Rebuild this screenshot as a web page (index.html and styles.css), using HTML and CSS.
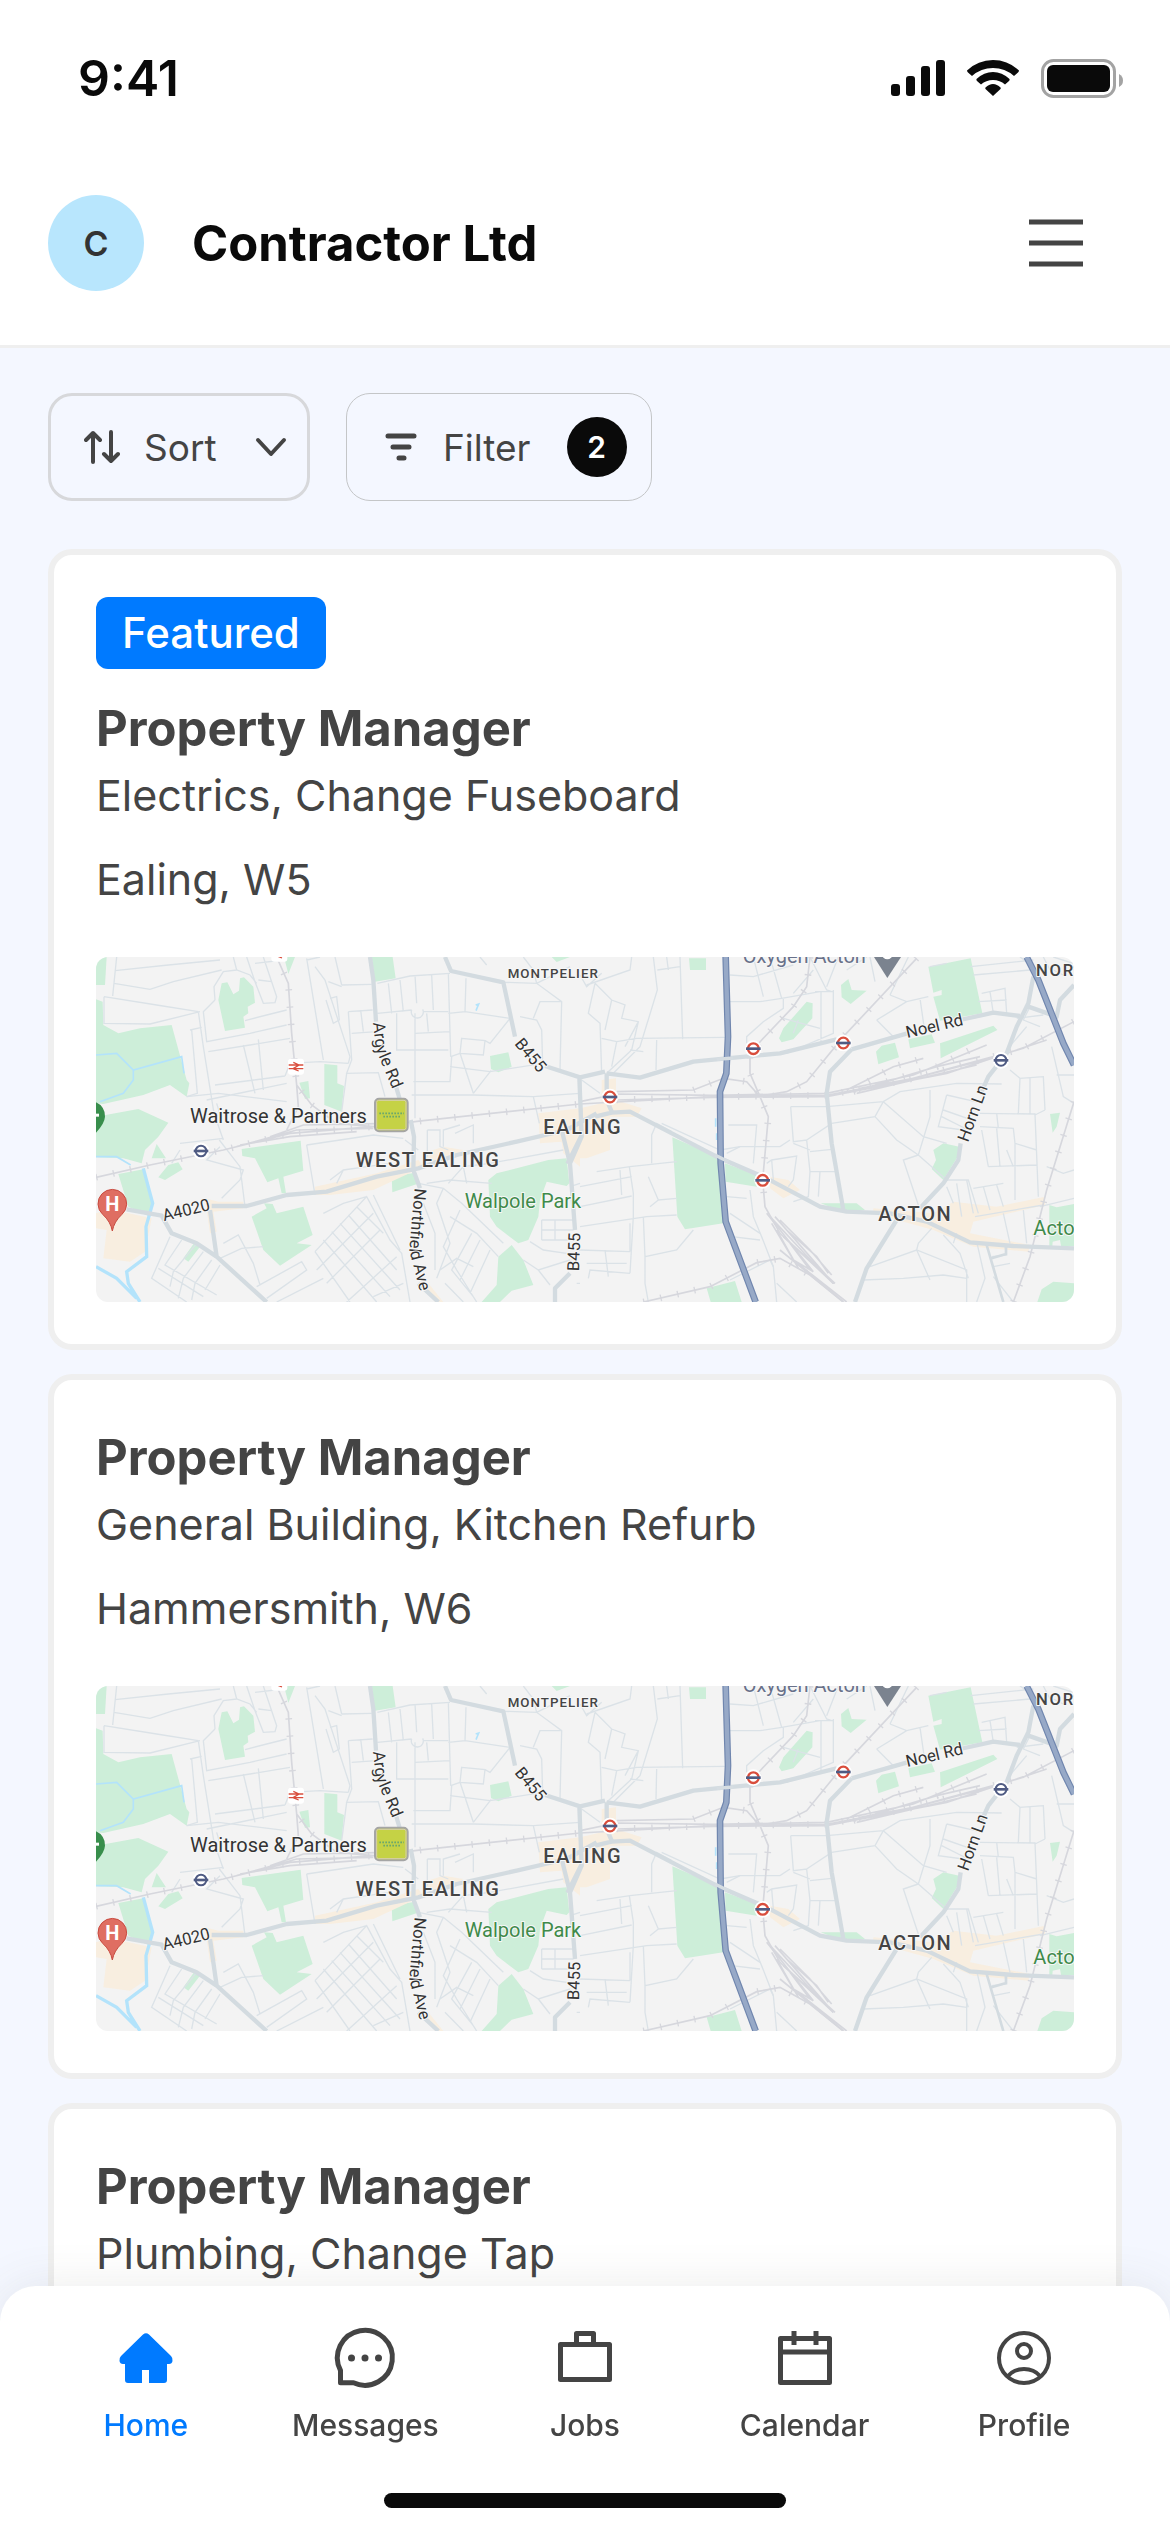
FILE: index.html
```html
<!DOCTYPE html>
<html lang="en">
<head>
    <meta charset="UTF-8">
    <meta name="viewport" content="width=device-width, initial-scale=1.0">
    <title>Contractor Ltd - Jobs</title>
    <link rel="stylesheet" href="styles.css">
</head>
<body>
    <!-- Map shared by the job cards -->
    <svg class="defs" aria-hidden="true">
        <defs>
            <path id="argylePath" d="M849 218L858 300L905 412L940 500" />
            <path id="northfieldPath" d="M974 714L958 900L995 1045" />
            <g id="tube">
                <circle r="25" fill="#fff" />
                <circle r="16" fill="#fff" stroke="#d94d3c" stroke-width="7" />
                <rect x="-22" y="-4" width="44" height="8" fill="#4f5b83" />
            </g>
            <g id="overground">
                <circle r="25" fill="#fff" />
                <circle r="16" fill="#fff" stroke="#4f5b83" stroke-width="6" />
                <rect x="-22" y="-4" width="44" height="8" fill="#4f5b83" />
            </g>
            <g id="rail">
                <rect x="-24" y="-24" width="48" height="48" rx="9" fill="#fff" />
                <path d="M-22 -5H22M-22 6H22M-8 -13L9 -5L-9 6L8 13" fill="none" stroke="#d94d3c" stroke-width="4" />
            </g>
        </defs>
        <symbol id="map" viewBox="18 21 2934 1035" preserveAspectRatio="xMidYMid slice">
            <rect x="18" y="21" width="2934" height="1035" fill="#f3f3f3" />

            <!-- Parks -->
            <g fill="#cdeed9">
                <path d="M18 21H50L45 105H18ZM18 148L38 155L40 225L85 250L150 235L245 225L290 390L298 400L290 440L240 405L160 435L40 462L18 460Z" />
                <path d="M385 150L395 100L412 97L430 133L447 122L450 85L462 82L490 110L495 158L473 170L475 190L460 200L465 233L405 243Z" />
                <path d="M18 500L145 477L235 518L205 560L165 600L155 640L100 625L18 622ZM200 582L228 625H185ZM205 682L235 645L265 637L278 658L225 690ZM85 672L160 658L190 755L180 800L115 770Z" />
                <path d="M582 21H615L595 72ZM845 21H908L917 85L855 95ZM703 342L742 346V400L762 408L755 485L703 465ZM628 398L655 393L660 445L645 447ZM1200 318L1255 307L1265 350L1225 367L1203 357Z" />
                <path d="M455 597L632 572L640 662L580 680L588 730H575L565 685L532 697L495 625L457 618ZM485 800L530 775L522 760L548 762L560 790L640 770L668 855L620 880L665 885L570 947L520 900Z" />
                <path d="M905 680L975 668L988 700L907 727ZM280 925L312 880L330 890L295 935ZM1385 21H1440L1400 36Z" />
                <path d="M1195 690L1220 670L1375 630L1430 625L1438 700L1430 708L1370 695L1350 750L1345 800L1315 870L1285 880L1220 830L1200 800ZM1265 885L1300 930L1330 1005L1265 1022L1230 1056H1175L1220 1005L1225 920Z" />
                <g transform="translate(1470 0)">
                    <path d="M327 25H378V60H330ZM783 105L805 87L815 120L860 122L812 162L785 142ZM597 265L610 235L680 155L698 160L697 205L640 268L605 277Z" />
                    <path d="M1045 50L1172 25L1207 190L1080 212L1060 140L1085 135V120L1060 128ZM888 305L905 287L945 278L957 322L895 343ZM985 268L1055 253L1065 278L990 295ZM1080 280L1240 227L1252 240L1082 325Z" />
                    <path d="M1060 600L1090 580L1138 590L1133 620L1090 690L1055 657L1068 630ZM277 562L412 620L420 700L430 820L315 838L292 800ZM435 640L545 680L530 710L437 695ZM722 760H830L855 780L780 782Z" />
                    <path d="M1408 765L1430 772L1482 762V888H1443L1440 870L1418 875L1417 888H1408ZM1410 492L1440 488L1430 530L1418 548ZM1385 1018L1420 995L1482 1000V1056H1372ZM380 1015L465 993L485 1056H392Z" />
                </g>
            </g>

            <!-- High streets -->
            <g fill="#f8eee0">
                <path d="M18 790L60 778L185 805L165 905L120 935L40 925L50 840L18 835ZM345 745L385 755H460V775L370 785L380 845L360 850ZM675 710L860 670L985 630L1000 650L850 720L720 735H675Z" />
                <path d="M1000 610L1060 590L1120 600L1060 640L1000 635ZM1345 490L1470 475V650L1420 610L1415 575L1350 580ZM1000 1010L1015 1000L1060 1056H1035Z" />
                <path transform="translate(1470 0)" d="M0 475L65 460V390L108 385V450L185 475L170 500L90 500V600L20 625H0ZM570 680L625 690L660 720L610 745L570 715ZM880 775L1060 790L1120 755L1250 770L1395 740V765L1180 815L1170 850L1350 885L1345 905L1180 890L1060 840L880 790Z" />
            </g>

            <!-- Water -->
            <g fill="none" stroke="#b3e3fb" stroke-width="5">
                <path d="M18 315L80 310L130 360L275 320L282 370M130 360V390L100 430L30 455M18 620L80 620L122 645M1157 165L1166 162L1158 182M1877 505V530M1880 550V570" />
                <path stroke-width="10" d="M160 655L188 760L168 830L170 920L110 965L115 1000L150 1056M18 950L80 985L140 1045" />
            </g>

            <!-- Side streets -->
            <g fill="none" stroke="#dbe2e7" stroke-width="4">
                <path d="M80 21L68 138M75 62L235 45L390 30M72 100L180 118L250 95L395 60M42 140L200 165L325 185M42 140V220L180 222L330 185M325 185L340 290L372 490L400 570M300 240L335 232M305 240L322 430L290 440" />
                <path d="M375 150L372 110L400 65L440 60L480 75L500 100M375 150L340 185L350 275L480 250L590 225M430 21L440 60M470 21L495 95L520 160L555 158L560 140L520 21M495 40L580 30M505 90L545 95M465 212L530 195L590 180" />
                <path d="M355 305L480 285L600 265M460 285L495 430M505 268L520 420M375 405L585 378M350 450L590 400M290 440L385 430L590 455M380 460L395 510M585 378L600 340L690 335L775 340M650 25L700 330M650 30L690 21M675 50L705 90L780 320L775 340M715 95L755 110" />
                <path d="M720 145L740 140L748 210L730 220L708 150M755 105L845 103M775 185L848 180M785 250L860 245M775 185L785 330L770 370L865 368L885 440M770 370L755 485M735 21L755 105M812 180L820 245" />
                <path d="M862 100L960 78L1080 70M895 100L905 190M930 90L940 185M862 190L965 180M1000 185H1075M980 160L975 75M965 180A18 18 0 1 0 998 178M1025 75L1030 180M1075 70L1082 320M975 250L1080 245M920 190V300H1075M975 190V505M1010 190L1015 245M1128 85L1125 185L1075 190M1125 185L1260 205" />
                <path d="M1115 265L1185 272L1180 315L1110 310ZM1080 350L1200 365L1360 340M1082 320L1110 310M1110 310L1150 430M1203 362L1150 430M965 435H1150L1330 440L1470 430M970 395H1080L1085 320M1260 205L1200 280L1185 272M1290 200L1340 210L1355 240L1358 345M1242 97L1340 100L1415 155L1410 360M1300 21L1330 60L1340 100M1170 21L1190 45M1340 100L1440 50M1415 155H1350L1330 205M1330 440L1348 520" />
                <path d="M388 570L450 650L465 770M270 600L245 640M270 580L400 565M390 590L350 630L460 660L450 690L395 745M650 585L850 555L940 565M650 585L675 735M720 690L760 660L900 640M760 660L740 700M1012 540H1050V590L1075 600M1012 540V620M1110 525L1060 540V590M1095 550L1150 525V580M985 600L945 570" />
                <path d="M240 860L185 985L290 1056M275 870L225 945L380 1035M320 880L250 965L240 1010M340 905L280 985L265 1045M365 930L315 1000L305 1050M390 945L345 1020M205 955L340 1040M400 880L445 855L490 940L510 1005M500 1010L635 935L650 960L530 1045M390 925L455 895L520 890" />
                <path d="M675 905L780 1056M675 905L830 740L900 870L935 910L960 1056M700 870L860 1056M725 845L900 1040M750 820L930 1020M775 795L920 960M800 770L880 850M850 735L930 900M680 960L850 790M710 1000L870 840M770 1056L920 920M700 790L760 760L830 740M560 1056L700 985M850 1040L940 1000" />
                <path d="M985 700L1060 715L1115 760L1240 880M1060 715L1040 760L1080 880L1040 985M1075 700L1120 650L1200 640L1420 600M1080 800L1160 850L1225 920M1110 780L1060 890L1100 960L1160 1056M1145 850L1085 960L1150 1040M1170 870L1110 990M1200 900L1140 1030M1050 960L1100 925L1150 950M1065 1000L1120 1056M1000 760L1035 850V960M1010 700L1080 690L1205 700M1120 650L1130 700" />
                <path d="M1355 810H1450M1355 840H1450M1355 870H1440M1355 810V870M1320 875L1360 900L1430 910M1300 930L1345 960L1440 930M1345 960L1380 1005M1440 710L1470 700M1460 900H1470M1460 1000H1470M1395 810V870" />
                <g transform="translate(1470 0)">
                    <path d="M0 75L20 110L65 70M45 100L25 190L60 220L65 370M45 100L95 150L135 165L125 205L175 215L155 300L80 370M65 265L110 275L170 265L435 262M95 150L75 240M155 21L150 60L20 105M220 21L232 120L180 290L100 370M300 21L308 268M265 60L260 21M232 60L300 50M110 275L95 350M175 215L135 290M230 270L228 360M150 300L190 305" />
                    <path d="M450 75L520 80L640 45M520 21L550 140M450 155H540L605 145L720 125M610 145V175L550 215L500 260V280M570 21L605 145M610 205L720 235M640 130L700 60M723 125V275M705 125H760M655 210L640 250M690 21L740 120L755 125M760 120V250L620 310M775 21L740 110M800 60L860 21M870 21L885 95M890 210L940 260M930 135L980 155L1045 140M930 135L985 21M980 155L890 210M1020 145L1035 250M1050 50L1100 40" />
                    <path d="M1172 50L1360 30M1180 75L1350 60M1205 130L1275 115L1280 190M1195 155L1280 150M1230 125L1240 190M1350 170L1330 210L1380 230M1310 205L1390 195M1340 230L1280 300M1320 21L1360 50M1420 60L1450 75L1482 50M1420 21L1480 40M1415 290L1450 440L1482 460M1430 375H1482M1390 21L1410 60" />
                    <path d="M5 390L60 430M215 640V555L230 520L275 545M245 520L420 600L480 590L600 590L630 570M50 665L150 650L290 635M148 650L160 730V800L150 970M0 710L155 680M0 770L155 738M0 830L200 800L290 795M0 900L150 905M205 680L235 750L290 745M235 750L210 770M25 985L30 960L150 970M75 900L85 980M20 940L140 940M190 800L195 920L290 900L340 840M195 920V1000L205 1056M150 905V820M120 660L125 735" />
                    <path d="M445 525H530L520 640M440 610L480 590M560 640L575 630L650 618L640 690L625 710M575 630L580 690M510 720L520 800L545 860L580 950L590 1056M440 740L500 745M450 790L540 850M455 860L540 870M632 470L640 575L680 570L690 665L685 740L640 755M632 470H740L910 455L960 425L1130 400L1265 402M680 570L755 520L885 500L910 455M690 605L755 598M690 665H765M640 580L690 600M715 740L720 665" />
                    <path d="M885 500L950 570L1015 615L1100 690M1015 615L970 630L1015 765M910 455L1030 560L1100 580M1015 615L1050 500V420M1100 435L1075 530L1150 540M1100 435L1210 460M1090 480L1190 515M1085 500L1165 540M1200 490L1365 492L1375 740M1200 530L1300 535L1305 580L1370 600M1250 490L1255 535M1205 540L1225 650M1250 535L1260 650M1225 650L1370 645M1305 580V750M1290 360L1320 385L1390 380L1395 480M1320 385L1315 490M1350 385V490M1395 480L1365 495M1280 600L1300 650" />
                    <path d="M1090 690L1165 690L1195 790M1100 710L1120 760M1130 700L1145 800M1160 690L1180 790M1180 715L1270 700M1210 710L1230 780M1250 705L1270 770M1400 650L1450 670L1482 660M1380 770L1482 745M1185 800L1390 765M1270 790L1290 880M1330 780L1340 880M850 990L970 985L1090 975L1160 985M870 950L1010 900L1160 960V1056M1055 835L1015 880L1010 900L1050 990M1090 855L1140 910L1165 985M1190 875L1215 985L1190 1056M1235 920L1280 915L1275 890M1240 950L1290 940M1240 980L1300 1056M1130 850L1120 880M580 950L570 930L450 990M590 1000L650 1056" />
                </g>
            </g>

            <!-- Railways -->
            <g fill="none" stroke="#d6d7dd" stroke-width="5">
                <path d="M18 682L180 645L400 600L600 550L850 530L1000 512L1470 462M440 590L620 540L850 535M450 585L600 560L800 545M540 560L640 525L900 520M560 21L595 100L605 250L620 405L665 465L740 520L850 530M620 405L625 470L590 540" />
                <g transform="translate(1470 0)">
                    <path d="M0 462L400 440L740 436L980 390L1330 295L1482 215M0 455L110 432L400 436L740 430L1000 375L1220 285M110 450L400 442L740 440L1100 370L1400 270M110 425L340 420L430 385L500 395L540 440L565 500L548 690L555 770L600 850L760 1000M800 420L940 350L1030 325M820 425L1070 350L1200 320M830 430L1190 345M840 415L1000 385L1250 320" />
                    <path d="M1010 25L790 260L680 395L620 425L560 435M690 21L680 110L640 170L545 270L510 310V370L540 440M1482 455L1400 720L1350 920L1300 1056M190 1056L390 1010L530 938L600 925L690 975L790 1056" />
                    <path d="M560 790L700 965M570 800L720 960M585 800L760 1000M600 810L690 900L755 975M575 820L640 930L700 965M590 840L655 955M610 860L765 1000M620 840L710 920L745 970M600 900L790 1056M640 930L800 1056M630 880L690 960" />
                </g>
            </g>
            <g fill="none" stroke="#d6d7dd" stroke-width="20" stroke-dasharray="4 48">
                <path d="M18 682L180 645L400 600L600 550L850 530L1000 512L1470 462M560 21L595 100L605 250L620 405L665 465L740 520" />
                <path transform="translate(1470 0)" d="M110 450L400 440L740 436L980 390L1330 295L1482 215M820 420L940 350L1030 325M820 425L1070 350L1200 285M1010 25L790 260L680 395L620 425M690 21L680 110L640 170L545 270L510 310V370L540 440L565 500L548 690L555 770M1482 455L1400 720L1350 920L1300 1056M190 1056L390 1010L530 938L600 925L690 975M340 420L430 385L500 395" />
            </g>

            <!-- Main roads -->
            <g fill="none" stroke="#d3dbe0" stroke-width="13" stroke-linejoin="round">
                <path d="M110 778L215 797L245 850L320 880L380 920L530 1056M365 768H470L590 735L710 725L860 680L985 655L1100 615L1280 575L1430 540L1520 490M360 780L380 920M840 21L850 90L858 215M918 410L930 450M962 510L972 560L970 660L990 715M1065 21L1083 63L1240 97L1275 260M1365 348L1470 382L1545 365M1468 382L1475 560L1440 640L1455 840M1415 540L1440 640M1440 970L1395 1015V1056M985 1000L1045 1056" />
                <g transform="translate(1470 0)">
                    <path d="M80 370L180 383L340 335L440 325L600 310L770 268M815 298L940 262L990 248M1140 210L1240 188L1320 198M80 370V450L95 485M45 500L95 488L150 485L410 620L560 685L720 770L800 785L930 790L1040 815L1170 877L1300 888L1482 895M815 298L750 365L740 430L755 580L790 780" />
                    <path d="M1360 80L1345 160L1310 230L1280 310L1225 380L1205 425M1142 580L1135 630L1090 700L1020 775M950 810L860 955L825 1056M1345 170L1430 200L1440 150L1482 105" />
                    <path stroke-width="8" d="M1220 885L1270 1056M1235 925L1278 912V888M0 385L5 550L-40 640" />
                </g>
            </g>

            <!-- North Circular and A40 -->
            <g transform="translate(1470 0)" fill="none" stroke-linejoin="round">
                <path d="M437 21L444 260L439 370L420 425L422 640L437 815L527 1056M1340 21L1375 90L1450 280L1482 345" stroke="#7086ae" stroke-width="20" />
                <path d="M437 21L444 260L439 370L420 425L422 640L437 815L527 1056M1340 21L1375 90L1450 280L1482 345" stroke="#97a9c7" stroke-width="13" />
                <path d="M405 615L445 635M410 328L460 324" stroke="#d6dde2" stroke-width="10" />
            </g>

            <!-- Place names -->
            <g class="map-text">
                <text class="map-area small" x="1253" y="84">MONTPELIER</text>
                <text class="map-area" x="797" y="651">WEST EALING</text>
                <text class="map-area" x="1360" y="551">EALING</text>
                <text class="map-area" x="2365" y="813">ACTON</text>
                <text class="map-area medium" x="2838" y="78">NOR</text>
                <text class="map-park" x="1124" y="773">Walpole Park</text>
                <text class="map-park" x="2830" y="856">Acto</text>
                <text class="map-place" x="300" y="518">Waitrose &amp; Partners</text>
                <text class="map-place muted" x="1958" y="38">Oxygen Acton</text>
                <text class="map-road"><textPath href="#argylePath">Argyle Rd</textPath></text>
                <text class="map-road"><textPath href="#northfieldPath">Northfield Ave</textPath></text>
                <text class="map-road" transform="translate(222 814) rotate(-14)">A4020</text>
                <text class="map-road" transform="translate(1272 282) rotate(50)">B455</text>
                <text class="map-road" transform="translate(1467 964) rotate(-88)">B455</text>
                <text class="map-road" transform="translate(2452 264) rotate(-13)">Noel Rd</text>
                <text class="map-road" transform="translate(2634 578) rotate(-70)">Horn Ln</text>
            </g>

            <!-- Markers -->
            <use href="#overground" x="333" y="603" />
            <use href="#overground" x="2733" y="331" />
            <use href="#tube" x="1990" y="296" />
            <use href="#tube" x="2260" y="279" />
            <use href="#tube" x="1560" y="441" />
            <use href="#tube" x="2018" y="691" />
            <use href="#rail" x="618" y="350" />
            <use href="#rail" x="568" y="11" />
            <path d="M2352 21H2433L2392 84Z" fill="#7b838f" />
            <circle cx="2392" cy="12" r="16" fill="#fff" />
            <rect x="855" y="446" width="98" height="98" rx="12" fill="#c5d245" stroke="#a5a5a5" stroke-width="6" />
            <rect x="860" y="451" width="88" height="88" rx="6" fill="none" stroke="#d6ceb0" stroke-width="3" />
            <path d="M868 490H942M880 500H930" stroke="#6ba86c" stroke-width="5" stroke-dasharray="5 4" />
            <path d="M18 457A44 44 0 0 1 45 500Q44 520 18 548Z" fill="#388e4c" />
            <rect x="18" y="491" width="9" height="9" fill="#fff" />
            <path d="M67 843Q62 815 38 793A43 43 0 1 1 96 793Q72 815 67 843Z" fill="#df6e62" stroke="#c84a3f" stroke-width="3" />
            <text class="map-hospital" x="67" y="782">H</text>
        </symbol>
    </svg>

    <!-- Status Bar -->
    <div class="status-bar">
        <span class="time">9:41</span>
        <div class="status-icons">
            <svg width="54" height="36" viewBox="0 0 54 36" fill="#0a0a0a">
                <rect x="0" y="24" width="9" height="12" rx="3" />
                <rect x="15" y="16" width="9" height="20" rx="3" />
                <rect x="30" y="6" width="9" height="30" rx="3" />
                <rect x="45" y="0" width="9" height="36" rx="3" />
            </svg>
            <svg width="52" height="36" viewBox="0 0 52 36" fill="#0a0a0a">
                <path d="M0 10.5Q11 0 26 0T52 10.5Q52 11.5 51 12.5L47 16Q38 8 26 8T5 16L1 12.5Q0 11.5 0 10.5Z" />
                <path d="M9.500 19Q17 12 26 12T42.500 19Q43 20 42 21L38 24.500Q33 20 26 20T14 24.500L10 21Q9 20 9.500 19Z" />
                <path d="M18.500 27.500Q22 24 26 24T33.500 27.500Q34 28.500 33.500 29L26 36L18.500 29Q18 28.500 18.500 27.500Z" />
            </svg>
            <svg width="84" height="39" viewBox="0 0 84 39">
                <rect x="1.500" y="1.500" width="72" height="36" rx="11" fill="none" stroke="#a3a3a3" stroke-width="3" />
                <rect x="6" y="6" width="63" height="27" rx="6" fill="#0a0a0a" />
                <path d="M78 15Q82 17 82 21.500T78 28Z" fill="#a3a3a3" />
            </svg>
        </div>
    </div>

    <!-- Header -->
    <header class="header">
        <div class="avatar">C</div>
        <h1>Contractor Ltd</h1>
        <button class="menu-btn" aria-label="Menu">
            <svg width="72" height="72" viewBox="0 0 72 72" stroke="#444" stroke-width="5">
                <path d="M9 15H63M9 36H63M9 57H63" />
            </svg>
        </button>
    </header>

    <main class="content">
        <!-- Sort and Filter -->
        <div class="toolbar">
            <label class="control sort">
                <svg width="36" height="36" viewBox="0 0 36 36" class="icon-line">
                    <path d="M9 33V4M2 11L9 4L16 11M27 3V32M20 25L27 32L34 25" />
                </svg>
                <select aria-label="Sort">
                    <option>Sort</option>
                </select>
                <svg width="36" height="36" viewBox="0 0 36 36" class="icon-line trailing">
                    <path d="M5 11L18 25L31 11" />
                </svg>
            </label>
            <button class="control filter">
                <svg width="36" height="36" viewBox="0 0 36 36" class="icon-line thick">
                    <path d="M5 7H31M10 18H26M16 29H21" />
                </svg>
                Filter
                <span class="count trailing">2</span>
            </button>
        </div>

        <!-- Job Cards -->
        <article class="card">
            <span class="tag">Featured</span>
            <h2>Property Manager</h2>
            <p class="job">Electrics, Change Fuseboard</p>
            <p class="location">Ealing, W5</p>
            <svg class="map" viewBox="0 0 978 345"><use href="#map" width="978" height="345" /></svg>
        </article>
        <article class="card">
            <h2>Property Manager</h2>
            <p class="job">General Building, Kitchen Refurb</p>
            <p class="location">Hammersmith, W6</p>
            <svg class="map" viewBox="0 0 978 345"><use href="#map" width="978" height="345" /></svg>
        </article>
        <article class="card">
            <h2>Property Manager</h2>
            <p class="job">Plumbing, Change Tap</p>
        </article>
    </main>

    <!-- Bottom Navigation -->
    <nav class="bottom-nav">
        <div class="nav-items">
            <a href="#home" class="nav-item active">
                <svg width="72" height="72" viewBox="0 0 72 72" fill="currentColor">
                    <path d="M33 12.500Q36 10 39 12.500L61 34Q63 36 62.500 39Q62 42 59 42H57V58Q57 61 54 61H39V48H32V61H18Q15 61 15 58V42H13Q10 42 9.500 39Q9 36 11 34Z" />
                </svg>
                Home
            </a>
            <a href="#messages" class="nav-item">
                <svg width="72" height="72" viewBox="0 0 72 72" fill="none" stroke="currentColor" stroke-width="5">
                    <path d="M24.500 60.800A27.500 27.500 0 1 0 11.500 48.500V60.800Z" stroke-linejoin="round" />
                    <g fill="currentColor" stroke="none">
                        <circle cx="22.500" cy="36" r="3.500" />
                        <circle cx="36" cy="36" r="3.500" />
                        <circle cx="49.500" cy="36" r="3.500" />
                    </g>
                </svg>
                Messages
            </a>
            <a href="#jobs" class="nav-item">
                <svg width="72" height="72" viewBox="0 0 72 72" fill="none" stroke="currentColor" stroke-width="5" stroke-linejoin="round">
                    <rect x="11.500" y="22.500" width="49" height="35" />
                    <path d="M27.500 22V11.500H44.500V22" />
                </svg>
                Jobs
            </a>
            <a href="#calendar" class="nav-item">
                <svg width="72" height="72" viewBox="0 0 72 72" fill="none" stroke="currentColor" stroke-width="5">
                    <rect x="11.500" y="16.500" width="49" height="44" stroke-linejoin="round" />
                    <path d="M11 30H61M25 9V23M47 9V23" />
                </svg>
                Calendar
            </a>
            <a href="#profile" class="nav-item">
                <svg width="72" height="72" viewBox="0 0 72 72" fill="none" stroke="currentColor" stroke-width="4">
                    <circle cx="36" cy="36" r="25" />
                    <circle cx="36" cy="29" r="7" />
                    <path d="M20 54Q26 47 36 47T52 54" />
                </svg>
                Profile
            </a>
        </div>
        <div class="home-indicator"></div>
    </nav>
</body>
</html>
```
FILE: styles.css
```css
* {
    margin: 0;
    padding: 0;
    box-sizing: border-box;
}

body {
    background: #f4f7ff;
    color: #444;
    font-family: Inter, sans-serif;
    font-optical-sizing: none;
}

svg {
    display: block;
    flex-shrink: 0;
}

button,
select {
    font: inherit;
    color: inherit;
    background: none;
    border: none;
    cursor: pointer;
}

.defs {
    position: absolute;
    width: 0;
    height: 0;
}

/* Status bar */
.status-bar {
    display: flex;
    align-items: center;
    justify-content: space-between;
    height: 141px;
    padding: 15px 45px 0 78px;
    background: white;
    color: #0a0a0a;
}

.time {
    font-size: 50px;
    font-weight: 600;
}

.status-icons {
    display: flex;
    align-items: center;
    gap: 22px;
}

/* Header */
.header {
    display: flex;
    align-items: center;
    gap: 48px;
    padding: 54px 78px 54px 48px;
    background: white;
    border-bottom: 3px solid #efefef;
}

.avatar {
    display: flex;
    align-items: center;
    justify-content: center;
    width: 96px;
    height: 96px;
    border-radius: 50%;
    background: #b8e6fd;
    color: #333;
    font-size: 34px;
    font-weight: 600;
}

h1 {
    flex: 1;
    color: #0a0a0a;
    font-size: 49px;
    font-weight: 700;
}

/* Sort and filter */
.content {
    display: flex;
    flex-direction: column;
    gap: 24px;
    padding: 45px 48px 180px;
}

.toolbar {
    display: flex;
    gap: 36px;
    margin-bottom: 24px;
}

.control {
    display: flex;
    align-items: center;
    gap: 24px;
    height: 108px;
    padding: 0 24px 0 36px;
    border: 1px solid #c4c6c8;
    border-radius: 24px;
    font-size: 37px;
}

.sort {
    padding: 0 18px 0 33px;
    border: 3px solid #d7d8db;
}

.sort select {
    appearance: none;
}

.trailing {
    margin-left: 12px;
}

.icon-line {
    fill: none;
    stroke: #444;
    stroke-width: 4px;
    stroke-linecap: round;
    stroke-linejoin: round;
}

.icon-line.thick {
    stroke-width: 5px;
}

.count {
    display: flex;
    align-items: center;
    justify-content: center;
    width: 60px;
    height: 60px;
    border-radius: 50%;
    background: #0a0a0a;
    color: white;
    font-size: 30px;
    font-weight: 600;
}

/* Job cards */
.card {
    padding: 42px;
    background: white;
    border: 6px solid #efefef;
    border-radius: 24px;
}

.tag {
    display: block;
    width: fit-content;
    margin-bottom: 24px;
    padding: 0 26px;
    border-radius: 12px;
    background: #007aff;
    color: white;
    font-size: 42px;
    font-weight: 500;
    line-height: 72px;
}

h2 {
    font-size: 49px;
    font-weight: 700;
    line-height: 72px;
}

.job,
.location {
    font-size: 43px;
    line-height: 60px;
}

.location {
    margin-top: 24px;
}

.map {
    width: 100%;
    height: auto;
    margin-top: 48px;
    border-radius: 12px;
}

.map-text {
    font-family: Roboto, sans-serif;
    fill: #333;
    stroke: #f7f7f7;
    stroke-width: 6px;
    stroke-linejoin: round;
    paint-order: stroke;
}

.map-area {
    fill: #444;
    font-size: 60px;
    font-weight: 500;
    letter-spacing: 5px;
}

.map-area.medium {
    font-size: 50px;
}

.map-area.small {
    font-size: 40px;
    letter-spacing: 3px;
}

.map-park {
    fill: #3f8a4a;
    font-size: 60px;
}

.map-place {
    font-size: 60px;
}

.map-place.muted {
    fill: #68718a;
}

.map-road {
    font-size: 50px;
}

.map-hospital {
    fill: white;
    font-family: Roboto, sans-serif;
    font-size: 60px;
    font-weight: 700;
    text-anchor: middle;
}

/* Bottom navigation */
.bottom-nav {
    position: fixed;
    left: 0;
    right: 0;
    bottom: 0;
    padding: 36px 36px 24px;
    background: white;
    border-radius: 36px 36px 0 0;
    box-shadow: 0 0 48px rgba(80, 80, 70, 0.1);
}

.nav-items {
    display: flex;
}

.nav-item {
    display: flex;
    flex: 1;
    flex-direction: column;
    align-items: center;
    gap: 12px;
    color: #444;
    font-size: 30px;
    font-weight: 500;
    line-height: 38px;
    text-decoration: none;
}

.nav-item.active {
    color: #007aff;
}

.home-indicator {
    width: 402px;
    height: 15px;
    margin: 49px auto 0;
    border-radius: 8px;
    background: #0a0a0a;
}
```
